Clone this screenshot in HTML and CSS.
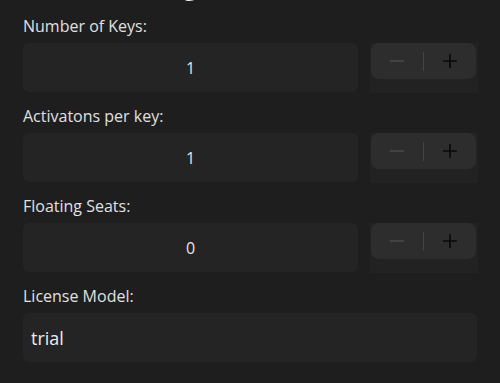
FILE: index.html
```html
<!DOCTYPE html>
<html>
<head>
<meta charset="utf-8">
<link rel="stylesheet" href="styles.css">
</head>
<body>
<div class="form">
  <h2 class="title">License Settings</h2>

  <div class="field">
    <div class="label">Number of Keys:</div>
    <div class="row">
      <div class="input num">1</div>
      <div class="stepper-wrap">
        <div class="stepper">
          <span class="btn minus"><svg width="16" height="16" viewBox="0 0 16 16"><path d="M1 8H15" stroke="currentColor" stroke-width="1.4"/></svg></span>
          <span class="divider"></span>
          <span class="btn plus"><svg width="16" height="16" viewBox="0 0 16 16"><path d="M1 8H15M8 1V15" stroke="currentColor" stroke-width="1.7"/></svg></span>
        </div>
      </div>
    </div>
  </div>

  <div class="field">
    <div class="label">Activatons per key:</div>
    <div class="row">
      <div class="input num">1</div>
      <div class="stepper-wrap">
        <div class="stepper">
          <span class="btn minus"><svg width="16" height="16" viewBox="0 0 16 16"><path d="M1 8H15" stroke="currentColor" stroke-width="1.4"/></svg></span>
          <span class="divider"></span>
          <span class="btn plus"><svg width="16" height="16" viewBox="0 0 16 16"><path d="M1 8H15M8 1V15" stroke="currentColor" stroke-width="1.7"/></svg></span>
        </div>
      </div>
    </div>
  </div>

  <div class="field">
    <div class="label">Floating Seats:</div>
    <div class="row">
      <div class="input num">0</div>
      <div class="stepper-wrap">
        <div class="stepper">
          <span class="btn minus"><svg width="16" height="16" viewBox="0 0 16 16"><path d="M1 8H15" stroke="currentColor" stroke-width="1.4"/></svg></span>
          <span class="divider"></span>
          <span class="btn plus"><svg width="16" height="16" viewBox="0 0 16 16"><path d="M1 8H15M8 1V15" stroke="currentColor" stroke-width="1.7"/></svg></span>
        </div>
      </div>
    </div>
  </div>

  <div class="field">
    <div class="label">License Model:</div>
    <div class="input text">trial</div>
  </div>
</div>
</body>
</html>
```
FILE: styles.css
```css
html, body {
  margin: 0;
  padding: 0;
  background: #1e1e1e;
  height: 100%;
  overflow: hidden;
}
.form {
  font-family: "Open Sans", "Noto Sans", sans-serif;
  color: #e2e2e2;
  padding: 0 22px 0 23px;
}
.title {
  margin: -30px 0 15px 0;
  font-size: 25px;
  line-height: 30px;
  font-weight: 400;
  color: #e6e6e6;
}
.field {
  margin-bottom: 12px;
}
.label {
  font-size: 16px;
  line-height: 22px;
  margin-bottom: 6px;
  color: #e0e0e0;
}
.row {
  display: grid;
  grid-template-columns: 1fr 108px;
  column-gap: 12px;
}
.input {
  height: 49px;
  background: #242424;
  border-radius: 6px;
  display: flex;
  align-items: center;
  box-sizing: border-box;
}
.input.num {
  justify-content: center;
  font-size: 16px;
  color: #e4e4e4;
}
.input.text {
  padding-left: 8px;
  font-size: 18px;
  color: #ececec;
  margin-right: 1px;
}
.stepper-wrap {
  height: 50px;
  background: #222222;
  padding: 0 2px 0 1px;
  box-sizing: border-box;
}
.stepper {
  height: 36px;
  background: #2d2d2e;
  border-radius: 8px;
  display: flex;
  align-items: center;
}
.btn {
  flex: 1;
  display: flex;
  justify-content: center;
  align-items: center;
  height: 100%;
}
.btn svg {
  display: block;
}
.minus {
  color: #4e4e50;
}
.plus {
  color: #0a0a0a;
}
.divider {
  width: 1px;
  height: 19px;
  background: #444446;
}
```
